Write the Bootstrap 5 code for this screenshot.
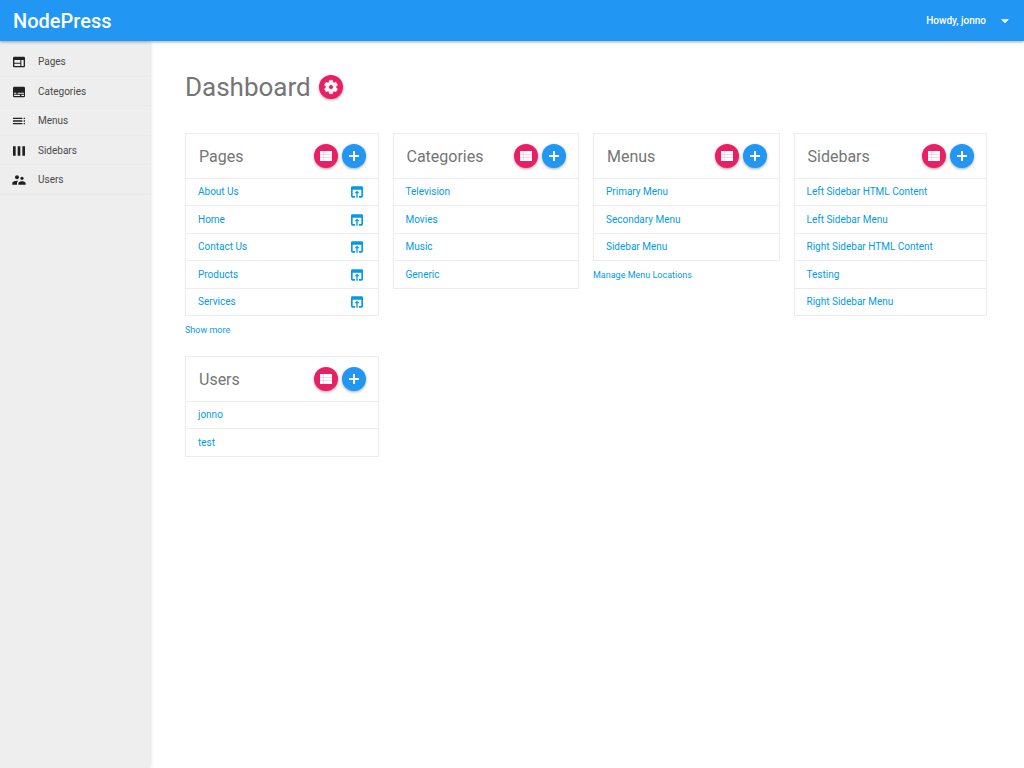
<!DOCTYPE html>
<html lang="en">
<head>
<meta charset="utf-8">
<meta name="viewport" content="width=device-width, initial-scale=1">
<title>NodePress – Dashboard</title>
<link href="https://cdn.jsdelivr.net/npm/bootstrap@5.3.0/dist/css/bootstrap.min.css" rel="stylesheet">
<style>
  body { font-family: Roboto, "Liberation Sans", sans-serif; font-size: 10px; line-height: 16px; color: #757575; background: #fff; }
  a { color: #039be5; text-decoration: none; }
  a:hover { text-decoration: underline; }
  .icon { width: 16px; height: 16px; fill: currentColor; flex: none; display: block; }

  .topbar { height: 41px; background: #2196f3; box-shadow: 0 1px 3px rgba(0,0,0,.35); z-index: 2; padding: 0 11px 0 13px; }
  .topbar .navbar-brand { font-size: 20px; line-height: 24px; font-weight: 500; color: #fff; }
  .account { font-size: 10px; line-height: 16px; font-weight: 500; color: #fff; gap: 11px; }

  .side { width: 150px; background: #eee; padding-top: 6px; box-shadow: 0 0 4px rgba(0,0,0,.2); }
  .side a { color: #4a4a4a; height: 29px; padding: 1px 0 0 11px; gap: 11px; border-bottom: 1px solid #eaeaea; }
  .side li:nth-child(odd) a { height: 30px; }
  .side .icon { color: #212121; }

  main { padding: 30px 37px 30px 35px; min-width: 0; }
  h1 { font-size: 26px; line-height: 32px; font-weight: 400; }
  h2 { font-size: 16px; line-height: 24px; font-weight: 400; padding-top: 2px; }
  .title-row { gap: 8px; margin-bottom: 30px; }

  .round { width: 24px; height: 24px; color: #fff; border: 0; border-radius: 50%; padding: 0; box-shadow: 0 1px 3px rgba(0,0,0,.35); }
  .round-pink { background: #e91e63; }
  .round-blue { background: #2196f3; }

  .panels { --bs-gutter-x: 14px; margin: 0; }
  .panels > :nth-child(4n+1) { padding-left: 0; }
  .panels > :nth-child(4n) { padding-right: 0; }
  .panels > div { margin-bottom: 18px; }
  .panel { border: 1px solid #ececec; }
  .panel-head { height: 44px; padding: 0 12px 0 13px; }
  .panel li { height: 27px; padding: 0 13px 0 12px; border-top: 1px solid #ececec; }
  .panel li:nth-child(even) { height: 28px; }
  .below { font-size: 9px; padding-top: 6px; }
</style>
</head>
<body class="d-flex flex-column min-vh-100">
<svg class="d-none" aria-hidden="true">
  <symbol id="web" viewBox="0 0 24 24"><path d="M19 4H5c-1.100 0-2 .9-2 2v12c0 1.100.9 2 2 2h14c1.100 0 2-.9 2-2V6c0-1.100-.9-2-2-2zm-5 14H5v-3.500h9v3.500zm0-5H5V9h9v4zm5 5h-3.500V9H19v9z"/></symbol>
  <symbol id="subtitles" viewBox="0 0 24 24"><path d="M19 4H5c-1.100 0-2 .9-2 2v12c0 1.100.9 2 2 2h14c1.100 0 2-.9 2-2V6c0-1.100-.9-2-2-2zM4.500 13h3.500v1.500H4.500V13zm9 5h-9v-2h9v2zm6 0h-4v-2h4v2zm0-3.500H10V13h9.500v1.500z"/></symbol>
  <symbol id="toc" viewBox="0 0 24 24"><path d="M3 9h14V7H3v2zm0 4h14v-2H3v2zm0 4h14v-2H3v2zm16 0h2v-2h-2v2zm0-10v2h2V7h-2zm0 6h2v-2h-2v2z"/></symbol>
  <symbol id="week" viewBox="0 0 24 24"><path d="M3 5h4v14H3zM10 5h4v14h-4zM17 5h4v14h-4z"/></symbol>
  <symbol id="people" viewBox="0 0 24 24"><path d="M16.500 12c1.380 0 2.490-1.120 2.490-2.500S17.880 7 16.500 7C15.120 7 14 8.120 14 9.500s1.120 2.500 2.500 2.500zM9 11c1.660 0 2.990-1.340 2.990-3S10.660 5 9 5C7.340 5 6 6.340 6 8s1.340 3 3 3zm7.500 3c-1.830 0-5.500.92-5.500 2.750V19h11v-2.250c0-1.830-3.670-2.750-5.500-2.750zM9 13c-2.330 0-7 1.170-7 3.500V19h7v-2.250c0-.85.33-2.340 2.370-3.470C10.500 13.100 9.660 13 9 13z"/></symbol>
  <symbol id="list" viewBox="0 0 24 24"><path d="M3 4.500h18v15H3z" opacity=".75"/><path d="M3 14h4.500v-4H3v4zm0 5.500h4.500V15H3v4.500zM3 9h4.500V4.500H3V9zm5.500 5H21v-4H8.500v4zm0 5.500H21V15H8.500v4.500zM8.500 4.500V9H21V4.500H8.500z"/></symbol>
  <symbol id="add" viewBox="0 0 24 24"><path d="M19.500 13.500h-6v6h-3v-6h-6v-3h6v-6h3v6h6v3z"/></symbol>
  <symbol id="open" viewBox="0 0 24 24"><path d="M19 3.500H5c-1.110 0-2 .9-2 2V18c0 1.100.89 2.500 2 2.500h4v-2.500H5.500V8.500h13V18H15v2.500h4c1.100 0 2-1.400 2-2.500V5.500c0-1.100-.89-2-2-2zm-7 6.500l-4 4h3v6.500h2V14h3l-4-4z"/></symbol>
  <symbol id="drop" viewBox="0 0 24 24"><path d="M6 9.500l6 6 6-6z"/></symbol>
  <symbol id="gear" viewBox="0 0 24 24"><path stroke="currentColor" stroke-width=".8" d="M19.430 12.980c.04-.32.07-.64.07-.98s-.03-.66-.07-.98l2.110-1.650c.19-.15.24-.42.12-.64l-2-3.460c-.12-.22-.39-.3-.61-.22l-2.490 1c-.52-.4-1.080-.73-1.690-.98l-.38-2.650C14.460 2.180 14.250 2 14 2h-4c-.25 0-.46.18-.49.42l-.38 2.650c-.61.25-1.170.59-1.690.98l-2.490-1c-.23-.09-.49 0-.61.22l-2 3.460c-.13.22-.07.49.12.64l2.110 1.650c-.04.32-.07.65-.07.98s.03.66.07.98l-2.110 1.650c-.19.15-.24.42-.12.64l2 3.460c.12.22.39.3.61.22l2.490-1c.52.4 1.080.73 1.690.98l.38 2.650c.03.24.24.42.49.42h4c.25 0 .46-.18.49-.42l.38-2.650c.61-.25 1.170-.59 1.690-.98l2.490 1c.23.09.49 0 .61-.22l2-3.460c.12-.22.07-.49-.12-.64l-2.110-1.650zM12 15.500c-1.930 0-3.500-1.570-3.500-3.500s1.570-3.500 3.500-3.500 3.500 1.570 3.500 3.500-1.570 3.500-3.500 3.500z"/></symbol>
</svg>

<header class="topbar d-flex align-items-center justify-content-between position-relative">
  <a class="navbar-brand m-0 p-0" href="#">NodePress</a>
  <button type="button" class="account btn border-0 p-0 d-flex align-items-center">Howdy, jonno <svg class="icon"><use href="#drop"/></svg></button>
</header>

<div class="d-flex flex-grow-1">
  <nav class="side flex-shrink-0" aria-label="Admin">
    <ul class="list-unstyled m-0">
      <li><a class="d-flex align-items-center" href="#"><svg class="icon"><use href="#web"/></svg>Pages</a></li>
      <li><a class="d-flex align-items-center" href="#"><svg class="icon"><use href="#subtitles"/></svg>Categories</a></li>
      <li><a class="d-flex align-items-center" href="#"><svg class="icon"><use href="#toc"/></svg>Menus</a></li>
      <li><a class="d-flex align-items-center" href="#"><svg class="icon"><use href="#week"/></svg>Sidebars</a></li>
      <li><a class="d-flex align-items-center" href="#"><svg class="icon"><use href="#people"/></svg>Users</a></li>
    </ul>
  </nav>

  <main class="flex-grow-1">
    <div class="title-row d-flex align-items-center">
      <h1 class="m-0">Dashboard</h1>
      <button type="button" class="round round-pink d-flex align-items-center justify-content-center" aria-label="Dashboard settings"><svg class="icon"><use href="#gear"/></svg></button>
    </div>

    <div class="panels row">
      <div class="col-3">
        <section class="panel">
          <div class="panel-head d-flex align-items-center gap-1">
            <h2 class="m-0 me-auto">Pages</h2>
            <button type="button" class="round round-pink d-flex align-items-center justify-content-center" aria-label="List pages"><svg class="icon"><use href="#list"/></svg></button>
            <button type="button" class="round round-blue d-flex align-items-center justify-content-center" aria-label="Add page"><svg class="icon"><use href="#add"/></svg></button>
          </div>
          <ul class="list-unstyled m-0">
            <li class="d-flex align-items-center justify-content-between"><a href="#">About Us</a><a href="#" aria-label="Open About Us"><svg class="icon"><use href="#open"/></svg></a></li>
            <li class="d-flex align-items-center justify-content-between"><a href="#">Home</a><a href="#" aria-label="Open Home"><svg class="icon"><use href="#open"/></svg></a></li>
            <li class="d-flex align-items-center justify-content-between"><a href="#">Contact Us</a><a href="#" aria-label="Open Contact Us"><svg class="icon"><use href="#open"/></svg></a></li>
            <li class="d-flex align-items-center justify-content-between"><a href="#">Products</a><a href="#" aria-label="Open Products"><svg class="icon"><use href="#open"/></svg></a></li>
            <li class="d-flex align-items-center justify-content-between"><a href="#">Services</a><a href="#" aria-label="Open Services"><svg class="icon"><use href="#open"/></svg></a></li>
          </ul>
        </section>
        <div class="below"><a href="#">Show more</a></div>
      </div>

      <div class="col-3">
        <section class="panel">
          <div class="panel-head d-flex align-items-center gap-1">
            <h2 class="m-0 me-auto">Categories</h2>
            <button type="button" class="round round-pink d-flex align-items-center justify-content-center" aria-label="List categories"><svg class="icon"><use href="#list"/></svg></button>
            <button type="button" class="round round-blue d-flex align-items-center justify-content-center" aria-label="Add category"><svg class="icon"><use href="#add"/></svg></button>
          </div>
          <ul class="list-unstyled m-0">
            <li class="d-flex align-items-center"><a href="#">Television</a></li>
            <li class="d-flex align-items-center"><a href="#">Movies</a></li>
            <li class="d-flex align-items-center"><a href="#">Music</a></li>
            <li class="d-flex align-items-center"><a href="#">Generic</a></li>
          </ul>
        </section>
      </div>

      <div class="col-3">
        <section class="panel">
          <div class="panel-head d-flex align-items-center gap-1">
            <h2 class="m-0 me-auto">Menus</h2>
            <button type="button" class="round round-pink d-flex align-items-center justify-content-center" aria-label="List menus"><svg class="icon"><use href="#list"/></svg></button>
            <button type="button" class="round round-blue d-flex align-items-center justify-content-center" aria-label="Add menu"><svg class="icon"><use href="#add"/></svg></button>
          </div>
          <ul class="list-unstyled m-0">
            <li class="d-flex align-items-center"><a href="#">Primary Menu</a></li>
            <li class="d-flex align-items-center"><a href="#">Secondary Menu</a></li>
            <li class="d-flex align-items-center"><a href="#">Sidebar Menu</a></li>
          </ul>
        </section>
        <div class="below"><a href="#">Manage Menu Locations</a></div>
      </div>

      <div class="col-3">
        <section class="panel">
          <div class="panel-head d-flex align-items-center gap-1">
            <h2 class="m-0 me-auto">Sidebars</h2>
            <button type="button" class="round round-pink d-flex align-items-center justify-content-center" aria-label="List sidebars"><svg class="icon"><use href="#list"/></svg></button>
            <button type="button" class="round round-blue d-flex align-items-center justify-content-center" aria-label="Add sidebar"><svg class="icon"><use href="#add"/></svg></button>
          </div>
          <ul class="list-unstyled m-0">
            <li class="d-flex align-items-center"><a href="#">Left Sidebar HTML Content</a></li>
            <li class="d-flex align-items-center"><a href="#">Left Sidebar Menu</a></li>
            <li class="d-flex align-items-center"><a href="#">Right Sidebar HTML Content</a></li>
            <li class="d-flex align-items-center"><a href="#">Testing</a></li>
            <li class="d-flex align-items-center"><a href="#">Right Sidebar Menu</a></li>
          </ul>
        </section>
      </div>

      <div class="col-3">
        <section class="panel">
          <div class="panel-head d-flex align-items-center gap-1">
            <h2 class="m-0 me-auto">Users</h2>
            <button type="button" class="round round-pink d-flex align-items-center justify-content-center" aria-label="List users"><svg class="icon"><use href="#list"/></svg></button>
            <button type="button" class="round round-blue d-flex align-items-center justify-content-center" aria-label="Add user"><svg class="icon"><use href="#add"/></svg></button>
          </div>
          <ul class="list-unstyled m-0">
            <li class="d-flex align-items-center"><a href="#">jonno</a></li>
            <li class="d-flex align-items-center"><a href="#">test</a></li>
          </ul>
        </section>
      </div>
    </div>
  </main>
</div>
<script src="https://cdn.jsdelivr.net/npm/bootstrap@5.3.0/dist/js/bootstrap.bundle.min.js"></script>
</body>
</html>
